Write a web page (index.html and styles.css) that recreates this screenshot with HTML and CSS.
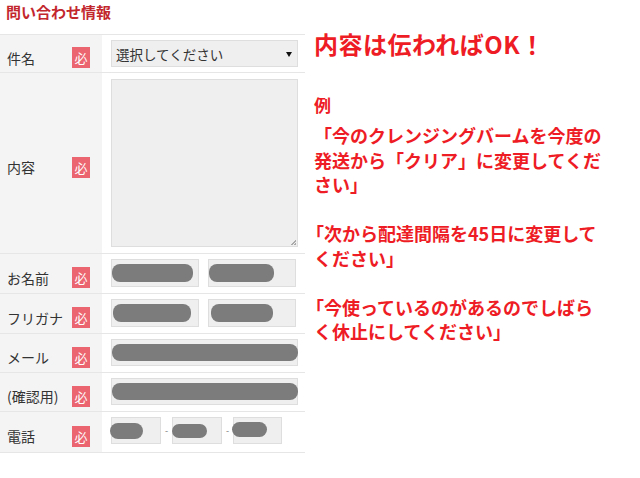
FILE: index.html
```html
<!DOCTYPE html>
<html lang="ja">
<head>
<meta charset="utf-8">
<title>問い合わせ情報</title>
<link rel="stylesheet" href="styles.css">
</head>
<body>
<div class="page">
  <section class="form">
    <h1 class="form-title">問い合わせ情報</h1>
    <div class="table">
      <div class="row">
        <div class="th"><span class="label">件名</span><span class="req">必</span></div>
        <div class="td td-select">
          <div class="select"><span>選択してください</span><span class="arrow"></span></div>
        </div>
      </div>
      <div class="row">
        <div class="th"><span class="label">内容</span><span class="req">必</span></div>
        <div class="td td-area">
          <div class="textarea"><span class="grip"></span></div>
        </div>
      </div>
      <div class="row">
        <div class="th"><span class="label">お名前</span><span class="req">必</span></div>
        <div class="td">
          <div class="input half"><span class="blob b-n1"></span></div>
          <div class="input half"><span class="blob b-n2"></span></div>
        </div>
      </div>
      <div class="row">
        <div class="th"><span class="label">フリガナ</span><span class="req">必</span></div>
        <div class="td">
          <div class="input half"><span class="blob b-k1"></span></div>
          <div class="input half"><span class="blob b-k2"></span></div>
        </div>
      </div>
      <div class="row">
        <div class="th"><span class="label">メール</span><span class="req">必</span></div>
        <div class="td">
          <div class="input full"><span class="blob b-m"></span></div>
        </div>
      </div>
      <div class="row">
        <div class="th"><span class="label">(確認用)</span><span class="req">必</span></div>
        <div class="td">
          <div class="input full"><span class="blob b-m"></span></div>
        </div>
      </div>
      <div class="row">
        <div class="th"><span class="label">電話</span><span class="req">必</span></div>
        <div class="td td-tel">
          <div class="input tel"><span class="blob b-t1"></span></div>
          <span class="dash">-</span>
          <div class="input tel"><span class="blob b-t2"></span></div>
          <span class="dash">-</span>
          <div class="input tel tel3"><span class="blob b-t3"></span></div>
        </div>
      </div>
    </div>
  </section>
  <aside class="note">
    <h2 class="note-title">内容は伝わればOK！</h2>
    <p class="note-ex">例</p>
    <p class="note-body">「今のクレンジングバームを今度の発送から「クリア」に変更してください」</p>
    <p class="note-body note-hang">「次から配達間隔を45日に変更してください」</p>
    <p class="note-body note-hang">「今使っているのがあるのでしばらく休止にしてください」</p>
  </aside>
</div>
</body>
</html>
```
FILE: styles.css
```css
html, body {
  margin: 0;
  background: #fff;
}
body {
  font-family: "Noto Sans CJK JP", "Noto Sans", sans-serif;
  color: #333;
}
.page {
  display: flex;
  align-items: flex-start;
}
.form {
  width: 305px;
  flex: none;
}
.form-title {
  margin: 0 0 11px;
  padding-left: 6px;
  font-size: 15px;
  line-height: 23px;
  font-weight: bold;
  color: #c3272e;
}
.table {
  border-top: 1px solid #e6e6e6;
}
.row {
  display: flex;
  border-bottom: 1px solid #e6e6e6;
}
.th {
  width: 102px;
  flex: none;
  box-sizing: border-box;
  background: #f4f4f4;
  display: flex;
  align-items: center;
  padding: 8px 0 0 7px;
}
.label {
  width: 65px;
  font-size: 14px;
  line-height: 18px;
  color: #333;
}
.req {
  width: 18px;
  height: 21px;
  background: #eb6571;
  color: #fff;
  font-size: 13px;
  line-height: 21px;
  text-align: center;
}
.td {
  flex: 1;
  padding: 5px 7px 6px 9px;
  display: flex;
  align-items: center;
  gap: 9px;
}
.td-select {
  padding-bottom: 5px;
}
.td-area {
  padding-top: 6px;
  padding-bottom: 6px;
}
.td-tel {
  gap: 0;
  padding-bottom: 8px;
}
.select {
  box-sizing: border-box;
  width: 187px;
  height: 27px;
  background: #efefef;
  border: 1px solid #dedede;
  display: flex;
  align-items: center;
  justify-content: space-between;
  padding: 0 5px 0 4px;
  font-size: 13.5px;
  color: #333;
}
.arrow {
  width: 0;
  height: 0;
  border-left: 3px solid transparent;
  border-right: 3px solid transparent;
  border-top: 5px solid #111;
  margin-top: 1px;
}
.textarea {
  position: relative;
  box-sizing: border-box;
  width: 187px;
  height: 168px;
  background: #efefef;
  border: 1px solid #dedede;
}
.grip {
  position: absolute;
  right: 1px;
  bottom: 1px;
  width: 5px;
  height: 5px;
  background: linear-gradient(135deg, transparent 45%, #aaa 45%, #aaa 60%, transparent 60%, transparent 75%, #aaa 75%);
}
.input {
  box-sizing: border-box;
  height: 28px;
  background: #efefef;
  border: 1px solid #dedede;
  display: flex;
  align-items: center;
}
.half {
  width: 88px;
}
.full {
  width: 187px;
  height: 27px;
}
.tel {
  width: 50px;
  height: 27px;
}
.tel3 {
  width: 49px;
}
.dash {
  width: 11px;
  text-align: center;
  font-size: 9px;
  color: #777;
}
.blob {
  display: block;
  height: 18px;
  background: #7c7c7c;
  border-radius: 8px;
  flex: none;
}
.b-n1 { width: 81px; margin-left: 0; }
.b-n2 { width: 65px; margin-left: 0; }
.b-k1 { width: 78px; margin-left: 1px; }
.b-k2 { width: 62px; margin-left: 2px; }
.b-m { width: 186px; height: 17px; margin-left: 0; }
.b-t1 { width: 33px; height: 16px; margin-left: -2px; }
.b-t2 { width: 35px; height: 14px; margin-left: -1px; }
.b-t3 { width: 35px; height: 15px; margin-left: -2px; margin-top: -2px; }
.note {
  margin-left: 9px;
  width: 292px;
  flex: none;
  color: #ee1c25;
  font-weight: bold;
}
.note-title {
  margin: 30px 0 0;
  font-size: 24px;
  line-height: 28px;
  font-weight: bold;
  letter-spacing: 0.5px;
}
.note-ex {
  margin: 37px 0 0;
  font-size: 17px;
  line-height: 20px;
}
.note-body {
  margin: 8px 0 0;
  font-size: 18px;
  line-height: 24.5px;
}
.note-hang {
  margin-top: 24.5px;
  text-indent: -0.45em;
}
```
